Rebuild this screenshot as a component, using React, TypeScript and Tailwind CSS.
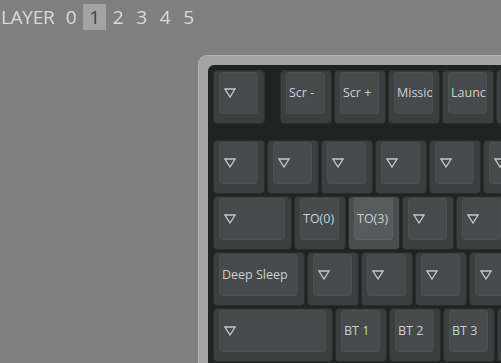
type Key = { w: number; label?: string; ml?: number; active?: boolean }

const ROWS: { keys: Key[]; mt: string }[] = [
  {
    mt: 'mt-0',
    keys: [
      { w: 52 },
      { w: 52, label: 'Scr -', ml: 13 },
      { w: 52, label: 'Scr +' },
      { w: 52, label: 'Mission Control' },
      { w: 52, label: 'Launchpad' },
      { w: 52 },
    ],
  },
  { mt: 'mt-[16px]', keys: [{ w: 52 }, { w: 52 }, { w: 52 }, { w: 52 }, { w: 52 }, { w: 52 }] },
  {
    mt: 'mt-[2px]',
    keys: [{ w: 79 }, { w: 52, label: 'TO(0)' }, { w: 52, label: 'TO(3)', active: true }, { w: 52 }, { w: 52 }],
  },
  { mt: 'mt-[2px]', keys: [{ w: 92, label: 'Deep Sleep' }, { w: 52 }, { w: 52 }, { w: 52 }, { w: 52 }] },
  {
    mt: 'mt-[2px]',
    keys: [{ w: 120 }, { w: 52, label: 'BT 1' }, { w: 52, label: 'BT 2' }, { w: 52, label: 'BT 3' }, { w: 52 }],
  },
]

function Transparent() {
  return (
    <svg width="12" height="10" viewBox="0 0 12 10" className="ml-[2px] shrink-0">
      <polygon points="1,1 11,1 6,9" fill="none" stroke="#c4c6c6" strokeWidth="1.3" strokeLinejoin="miter" />
    </svg>
  )
}

function KeyCap({ k }: { k: Key }) {
  return (
    <div
      className={`shrink-0 h-[54px] rounded-[4px] border border-[#2b2e2f] pt-[1px] pl-[5px] pr-[6px] pb-[9px] ${k.active ? 'bg-[#4a4e4f]' : 'bg-[#3b3f40]'}`}
      style={{ width: k.w, marginLeft: k.ml ?? 0 }}
    >
      <div
        className={`h-full rounded-[3px] border flex items-center pl-[2px] overflow-hidden whitespace-nowrap text-[12.5px] font-medium text-[#cdcfcf] ${k.active ? 'bg-[#575b5c] border-[#5e6263]' : 'bg-[#464a4b] border-[#4b4f50]'}`}
      >
        {k.label ? k.label : <Transparent />}
      </div>
    </div>
  )
}

export default function App() {
  return (
    <div className="w-[501px] h-[363px] overflow-hidden bg-[#7f7f7f] font-['Open_Sans',sans-serif]">
      {/* Layer selector */}
      <div className="flex items-center pt-[4px] h-[30px] text-[19px] tracking-[-0.3px] leading-none text-[#d9d9d9]">
        <span className="pl-[1px] pr-[5px]">LAYER</span>
        {[0, 1, 2, 3, 4, 5].map((n) => (
          <span
            key={n}
            className={`h-[26px] w-[23.5px] flex items-center justify-center ${n === 1 ? 'bg-[#a3a3a3] text-[#3f4142]' : ''}`}
          >
            {n}
          </span>
        ))}
      </div>

      {/* Keyboard case */}
      <div className="ml-[198px] mt-[25px] w-[360px] h-[320px] rounded-tl-[9px] bg-[#a4a4a4] border-l border-t border-[#b2b2b2] pl-[9px] pt-[9px]">
        <div className="h-full rounded-tl-[6px] bg-[#212222] pl-[5px] pt-[5px] flex flex-col">
          {ROWS.map((row, i) => (
            <div key={i} className={`flex gap-[2px] ${row.mt}`}>
              {row.keys.map((k, j) => (
                <KeyCap key={j} k={k} />
              ))}
            </div>
          ))}
        </div>
      </div>
    </div>
  )
}
